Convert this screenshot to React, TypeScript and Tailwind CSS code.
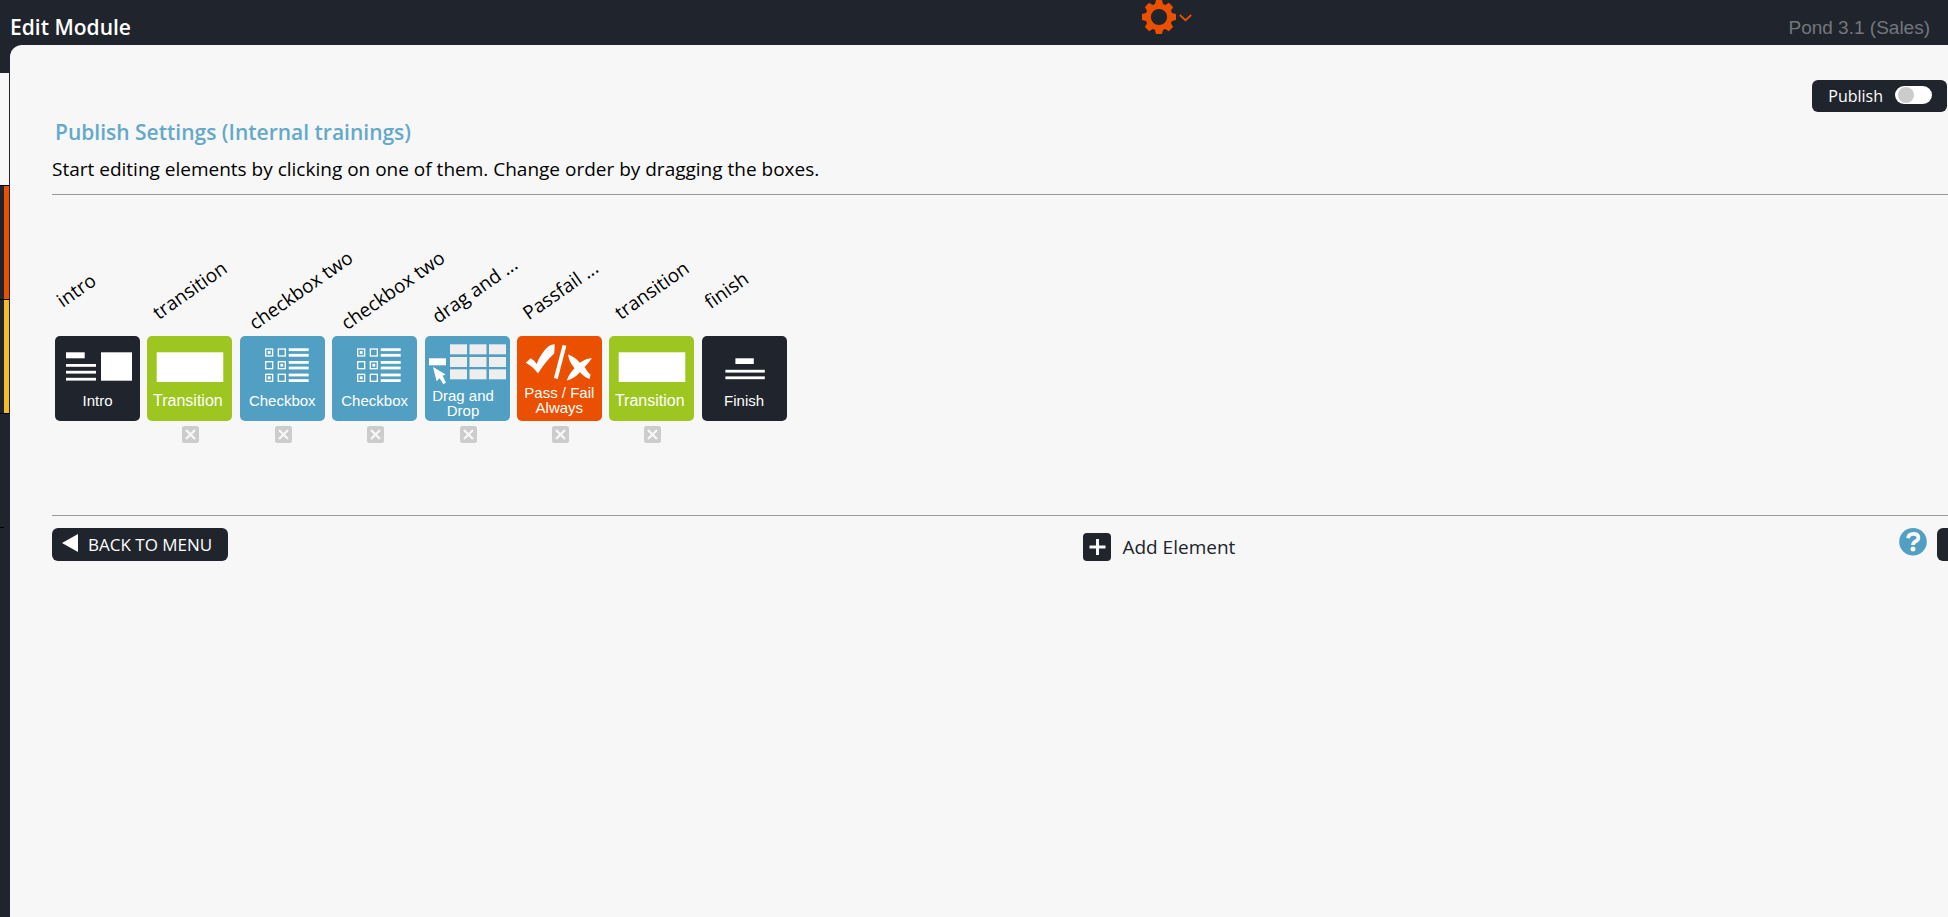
import type { ReactNode } from "react";

type Kind = "intro" | "transition" | "checkbox" | "drag" | "passfail" | "finish";

const looks: Record<Kind, { label: string; tile: string; text: string }> = {
  intro: { label: "Intro", tile: "bg-[#20242c]", text: "px-1 pt-2" },
  transition: { label: "Transition", tile: "bg-[#9ec620]", text: "pr-1 pt-2 text-[16px]" },
  checkbox: { label: "Checkbox", tile: "bg-[#519fc2]", text: "px-1 pt-2" },
  drag: { label: "Drag and Drop", tile: "bg-[#519fc2]", text: "px-1 pt-[3px] pr-3" },
  passfail: { label: "Pass / Fail Always", tile: "bg-[#eb4f00]", text: "px-1" },
  finish: { label: "Finish", tile: "bg-[#20242c]", text: "px-1 pt-2" },
};

const rows = [12.3, 25, 37.6];

const drawings: Record<Kind, ReactNode> = {
  intro: (
    <>
      <rect x="11" y="16.3" width="18.7" height="6" />
      <rect x="11" y="28" width="30" height="2.8" />
      <rect x="11" y="34.8" width="30" height="2.8" />
      <rect x="11" y="41.8" width="30" height="2.8" />
      <rect x="46" y="16.3" width="31" height="28.4" />
    </>
  ),
  transition: <rect x="9.7" y="16.3" width="66.6" height="29.7" />,
  checkbox: (
    <>
      {rows.map((y, i) => (
        <g key={y}>
          <rect x="25.7" y={y + 0.7} width="7" height="7" fill="none" stroke="white" strokeWidth="1.3" />
          <rect x="38.3" y={y + 0.7} width="7" height="7" fill="none" stroke="white" strokeWidth="1.3" />
          <rect x={i === 1 ? 40.4 : 27.8} y={y + 2.8} width="2.8" height="2.8" />
          <rect x="48.7" y={y} width="20" height="2.8" />
          <rect x="48.7" y={y + 5.6} width="20" height="2.8" />
        </g>
      ))}
    </>
  ),
  drag: (
    <>
      {[8.3, 21, 33.3].map((y) =>
        [25, 44.5, 64].map((x) => (
          <rect key={`${x}-${y}`} x={x} y={y} width="17" height="10" fill="#eeeeee" />
        )),
      )}
      <rect x="4" y="22.3" width="17" height="7" />
      <path d="M8 31L20.6 38.6L17.6 39.8L21 46.4L18.4 48.2L14.6 42.2L11.6 45.2Z" />
    </>
  ),
  passfail: (
    <>
      <path d="M8.7 26.8L13.6 22.3Q17.4 24.4 19.6 28Q24.2 16.6 31.8 10Q34.6 8.2 37.8 8.3L37.2 17.6Q28.4 25.6 21 37.6Q15.4 30 8.7 26.8Z" />
      <path d="M45.6 9L49.4 9.8L40.7 43L36.9 42Z" />
      <path d="M51 18.6Q57.4 20.4 62.8 26.8Q68.4 22.4 75 22.2Q72 26.4 67.6 31Q71 37 73.6 38.4L72.6 43Q67.6 41.4 62.8 36.2Q57.8 42.6 49.8 44.4Q52 37.6 57.6 32.2Q52.6 27.4 51 18.6Z" />
    </>
  ),
  finish: (
    <>
      <rect x="33.4" y="22.3" width="18.4" height="5.7" />
      <rect x="23.4" y="33.8" width="39.4" height="2.8" />
      <rect x="23.4" y="40.4" width="39.4" height="2.8" />
    </>
  ),
};

const elements: { name: string; kind: Kind }[] = [
  { name: "intro", kind: "intro" },
  { name: "transition", kind: "transition" },
  { name: "checkbox two", kind: "checkbox" },
  { name: "checkbox two", kind: "checkbox" },
  { name: "drag and ...", kind: "drag" },
  { name: "Passfail ...", kind: "passfail" },
  { name: "transition", kind: "transition" },
  { name: "finish", kind: "finish" },
];

function ElementTile({ name, kind }: { name: string; kind: Kind }) {
  const look = looks[kind];
  const removable = kind !== "intro" && kind !== "finish";
  return (
    <li className="flex flex-col items-start">
      <span className="mb-8 -rotate-[35deg] text-[19px] leading-7 whitespace-nowrap text-black">{name}</span>
      <button
        type="button"
        className={`flex h-[85px] w-[85px] flex-col items-center rounded-[5px] ${look.tile}`}
      >
        <svg viewBox="0 0 85 49" className="h-[49px] w-full shrink-0 overflow-visible" fill="white" aria-hidden="true">
          {drawings[kind]}
        </svg>
        <span
          className={`text-center font-['Liberation_Sans',Arial,sans-serif] text-[15px] leading-[15px] text-white ${look.text}`}
        >
          {look.label}
        </span>
      </button>
      {removable && (
        <button type="button" aria-label={`Remove ${name}`} className="mt-[5px] ml-[35px] h-[17px] w-[17px]">
          <svg viewBox="0 0 17 17" className="h-full w-full" aria-hidden="true">
            <rect width="17" height="17" rx="2.5" fill="#cccccc" />
            <path d="M4 4L13 13M13 4L4 13" stroke="#f7f7f7" strokeWidth="2.4" />
          </svg>
        </button>
      )}
    </li>
  );
}

function Gear() {
  return (
    <svg viewBox="-17 -17 34 34" className="h-[34px] w-[34px]" aria-hidden="true">
      <g fill="#eb4f00">
        {[0, 45, 90, 135, 180, 225, 270, 315].map((a) => (
          <path key={a} d="M-4.6 -11L-3 -17H3L4.6 -11Z" transform={`rotate(${a})`} />
        ))}
      </g>
      <circle r="10.8" fill="none" stroke="#eb4f00" strokeWidth="5.4" />
    </svg>
  );
}

export default function App() {
  return (
    <div className="flex min-h-screen flex-col overflow-x-hidden bg-[#20242c] font-['Open_Sans','Noto_Sans',sans-serif]">
      <header className="grid h-[45px] grid-cols-[58.6%_1fr_auto] items-start">
        <h1 className="pt-[13px] pl-2.5 text-[21px] leading-7 font-semibold text-white">Edit Module</h1>
        <div>
          <button type="button" aria-label="Settings" className="flex items-center gap-[3px]">
            <Gear />
            <svg viewBox="0 0 13 8" className="mt-0.5 h-2 w-[13px]" fill="none" stroke="#eb4f00" strokeWidth="1.8" aria-hidden="true">
              <path d="M0.8 1L6.5 6.2L12.2 1" />
            </svg>
          </button>
        </div>
        <p className="pt-3.5 pr-[18px] font-['Liberation_Sans',Arial,sans-serif] text-[19px] leading-7 text-[#74777c]">
          Pond 3.1 (Sales)
        </p>
      </header>

      <div className="flex flex-1">
        <aside className="mr-px flex w-[9px] flex-col pt-7">
          <div className="h-28 bg-[#f7f7f7]" />
          <div className="h-[114px] border-t border-black pl-1">
            <div className="h-full bg-[#eb4f00]" />
          </div>
          <div className="h-[115px] border-y border-black pl-1">
            <div className="h-full bg-[#f5bc2c]" />
          </div>
          <div className="mt-[113px] mr-[5px] border-t border-black" />
        </aside>

        <main className="min-w-0 flex-1 rounded-tl-xl bg-[#f7f7f7] pt-[35px] pl-[42px]">
          <div className="flex justify-end pr-px">
            <label className="flex h-8 items-center gap-3 rounded-md bg-[#20242c] pr-[15px] pl-4 text-[16px] text-white">
              Publish
              <input
                type="checkbox"
                role="switch"
                className="mb-0.5 flex h-[18px] w-[37px] appearance-none items-center rounded-full bg-white px-[3px] before:h-4 before:w-4 before:rounded-full before:bg-[#cccccc] checked:justify-end"
              />
            </label>
          </div>

          <h2 className="mt-1.5 pl-[3px] text-[21px] leading-7 font-semibold text-[#64a9c9]">
            Publish Settings (Internal trainings)
          </h2>
          <p className="mt-[9px] mb-[11px] text-[19px] leading-7 text-black">
            Start editing elements by clicking on one of them. Change order by dragging the boxes.
          </p>
          <hr className="border-[#999999]" />

          <ul className="mt-[81px] mb-[72px] ml-[3px] grid w-[739px] grid-cols-8">
            {elements.map((element, i) => (
              <ElementTile key={i} name={element.name} kind={element.kind} />
            ))}
          </ul>

          <hr className="border-[#999999]" />
          <footer className="grid grid-cols-[54.4%_1fr_auto] items-start pt-3">
            <div>
              <button
                type="button"
                className="flex h-[33px] items-center gap-2.5 rounded-md bg-[#20242c] pr-4 pl-2.5 text-[17px] text-white"
              >
                <svg viewBox="0 0 16 18" className="mb-1 h-[18px] w-4" fill="white" aria-hidden="true">
                  <path d="M0 9L16 0V18Z" />
                </svg>
                BACK TO MENU
              </button>
            </div>
            <div>
              <button type="button" className="mt-[5px] flex items-center gap-[11px] text-[19px] leading-7 text-[#20242c]">
                <svg viewBox="0 0 28 28" className="h-7 w-7" aria-hidden="true">
                  <rect width="28" height="28" rx="4" fill="#20242c" />
                  <path d="M6.5 14H22.5M14.5 6V22" stroke="#f7f7f7" strokeWidth="3" />
                </svg>
                Add Element
              </button>
            </div>
            <div className="flex items-start gap-2.5">
              <button type="button" aria-label="Help" className="h-7 w-7">
                <svg viewBox="0 0 28 28" className="h-7 w-7" aria-hidden="true">
                  <circle cx="14" cy="13.8" r="13.8" fill="#519fc2" />
                  <path d="M9 10.2Q9.6 5.8 14.4 5.8Q19.4 5.8 19.4 9.8Q19.4 12 16.6 13.4Q14 14.8 14 17" fill="none" stroke="#f7f7f7" strokeWidth="3.8" />
                  <circle cx="14" cy="21" r="2.5" fill="#f7f7f7" />
                </svg>
              </button>
              <button type="button" aria-label="Next" className="h-[33px] w-[11px] rounded-l-md bg-[#20242c]" />
            </div>
          </footer>
        </main>
      </div>
    </div>
  );
}
